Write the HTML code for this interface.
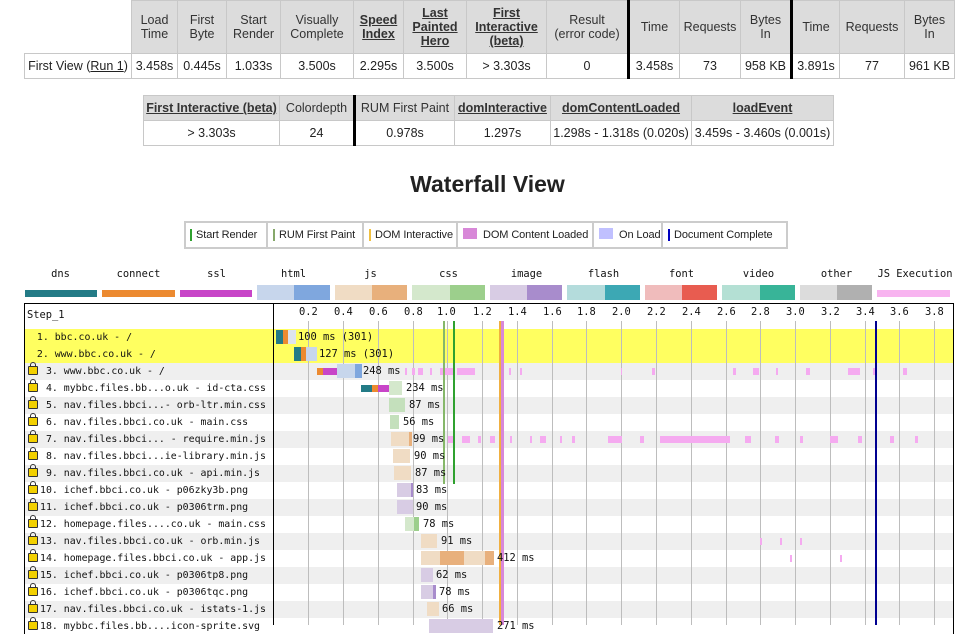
<!DOCTYPE html>
<html><head><meta charset="utf-8"><style>
body{margin:0;width:965px;height:625px;overflow:hidden;background:#fff;font-family:"Liberation Sans",Arial,sans-serif;color:#222;position:relative}
.a{position:absolute}
table{border-collapse:collapse;position:absolute;font-size:12.5px;table-layout:fixed}
td,th{border:1px solid #c8c8c8;text-align:center;padding:0;font-weight:normal;white-space:nowrap;overflow:hidden}
th{background:#dcdcdc;color:#333}
a{color:#222}
.tk{border-left:3px solid #000}
.m{font-family:"DejaVu Sans Mono","Liberation Mono",monospace;font-size:9.9px;color:#111;white-space:pre}
.leg{font-size:11px;white-space:nowrap;letter-spacing:-0.1px}
.leg>div{overflow:hidden}
.row{position:absolute;left:25px;width:928px;height:17px}
.lab{position:absolute;left:0;width:249px;height:17px;line-height:17px}
.lk{display:inline-block;width:8px;height:7px;background:#f2d000;border:1px solid #333;border-radius:1px;margin:0 2px 0 3px;vertical-align:-1px;position:relative}
.lk:before{content:"";position:absolute;left:1px;top:-5px;width:4px;height:4px;border:1px solid #333;border-bottom:none;border-radius:3px 3px 0 0}
.b{position:absolute;height:14px;top:1px}
.t{position:absolute;top:0;line-height:17px;font-size:10.4px}
.g{position:absolute;top:321px;width:1px;height:304px;background:#bdbdbd}
.jx{position:absolute;height:7px;top:5px;background:#f5aaf0}
</style></head><body>

<table style="left:24px;top:0;width:930px">
<colgroup><col style="width:107px"><col style="width:46px"><col style="width:49px"><col style="width:54px"><col style="width:73px"><col style="width:50px"><col style="width:63px"><col style="width:80px"><col style="width:82px"><col style="width:51px"><col style="width:61px"><col style="width:51px"><col style="width:48px"><col style="width:65px"><col style="width:50px"></colgroup>
<tr style="height:53px"><td style="border:none;border-bottom:1px solid #c8c8c8;background:#fff"></td>
<th>Load<br>Time</th><th>First<br>Byte</th><th>Start<br>Render</th><th>Visually<br>Complete</th><th><u><b>Speed<br>Index</b></u></th><th><u><b>Last<br>Painted<br>Hero</b></u></th><th><u><b>First<br>Interactive<br>(beta)</b></u></th><th>Result<br>(error code)</th><th class="tk">Time</th><th>Requests</th><th>Bytes<br>In</th><th class="tk">Time</th><th>Requests</th><th>Bytes<br>In</th></tr>
<tr style="height:25px"><td>First View (<u>Run 1</u>)</td><td>3.458s</td><td>0.445s</td><td>1.033s</td><td>3.500s</td><td>2.295s</td><td>3.500s</td><td>&gt; 3.303s</td><td>0</td><td class="tk">3.458s</td><td>73</td><td>958 KB</td><td class="tk">3.891s</td><td>77</td><td>961 KB</td></tr>
</table>

<table style="left:143px;top:95px;width:690px">
<colgroup><col style="width:136px"><col style="width:75px"><col style="width:100px"><col style="width:96px"><col style="width:141px"><col style="width:142px"></colgroup>
<tr style="height:25px"><th><u><b>First Interactive (beta)</b></u></th><th>Colordepth</th><th class="tk">RUM First Paint</th><th><u><b>domInteractive</b></u></th><th><u><b>domContentLoaded</b></u></th><th><u><b>loadEvent</b></u></th></tr>
<tr style="height:25px"><td>&gt; 3.303s</td><td>24</td><td class="tk">0.978s</td><td>1.297s</td><td>1.298s - 1.318s (0.020s)</td><td>3.459s - 3.460s (0.001s)</td></tr>
</table>

<div class="a" style="left:0;width:975px;top:171px;text-align:center;font-size:23px;font-weight:bold;color:#222">Waterfall View</div>

<div class="a leg" style="left:184px;top:221px;width:604px;height:28px;border:2px solid #ccc;box-sizing:border-box;display:flex">
<div style="width:76px;border-right:2px solid #ccc;line-height:24px;padding-left:4px"><span style="border-left:2px solid #2fa12f;padding-left:4px">Start Render</span></div>
<div style="width:89px;border-right:2px solid #ccc;line-height:24px;padding-left:5px"><span style="border-left:2px solid #86a86a;padding-left:4px">RUM First Paint</span></div>
<div style="width:87px;border-right:2px solid #ccc;line-height:24px;padding-left:5px"><span style="border-left:2px solid #f0c040;padding-left:4px">DOM Interactive</span></div>
<div style="width:129px;border-right:2px solid #ccc;line-height:24px;padding-left:5px"><span style="display:inline-block;width:14px;height:11px;background:#d888d8;vertical-align:-1px;margin-right:6px"></span>DOM Content Loaded</div>
<div style="width:62px;border-right:2px solid #ccc;line-height:24px;padding-left:5px"><span style="display:inline-block;width:14px;height:11px;background:#c0c0ff;vertical-align:-1px;margin-right:6px"></span>On Load</div>
<div style="width:110px;line-height:24px;padding-left:5px"><span style="border-left:2px solid #0000c0;padding-left:4px">Document Complete</span></div>
</div>

<div class="m" style="font-size:10.4px">
<div class="a" style="left:24px;top:268px;width:73px;text-align:center">dns</div>
<div class="a" style="left:102px;top:268px;width:73px;text-align:center">connect</div>
<div class="a" style="left:180px;top:268px;width:73px;text-align:center">ssl</div>
<div class="a" style="left:257px;top:268px;width:73px;text-align:center">html</div>
<div class="a" style="left:334px;top:268px;width:73px;text-align:center">js</div>
<div class="a" style="left:412px;top:268px;width:73px;text-align:center">css</div>
<div class="a" style="left:490px;top:268px;width:73px;text-align:center">image</div>
<div class="a" style="left:567px;top:268px;width:73px;text-align:center">flash</div>
<div class="a" style="left:645px;top:268px;width:73px;text-align:center">font</div>
<div class="a" style="left:722px;top:268px;width:73px;text-align:center">video</div>
<div class="a" style="left:800px;top:268px;width:73px;text-align:center">other</div>
<div class="a" style="left:875px;top:268px;width:80px;text-align:center">JS Execution</div>
</div>
<div class="a" style="left:25px;top:290px;width:72px;height:7px;background:#237b86"></div>
<div class="a" style="left:102px;top:290px;width:73px;height:7px;background:#ec8a30"></div>
<div class="a" style="left:180px;top:290px;width:72px;height:7px;background:#c845c8"></div>
<div class="a" style="left:257px;top:285px;width:37px;height:15px;background:#c7d6ec"></div><div class="a" style="left:294px;top:285px;width:36px;height:15px;background:#7fa7de"></div>
<div class="a" style="left:335px;top:285px;width:37px;height:15px;background:#f0dcc4"></div><div class="a" style="left:372px;top:285px;width:35px;height:15px;background:#e8b07c"></div>
<div class="a" style="left:412px;top:285px;width:38px;height:15px;background:#d4e8cc"></div><div class="a" style="left:450px;top:285px;width:35px;height:15px;background:#9ccf8c"></div>
<div class="a" style="left:490px;top:285px;width:37px;height:15px;background:#d8cce4"></div><div class="a" style="left:527px;top:285px;width:35px;height:15px;background:#a88ccc"></div>
<div class="a" style="left:567px;top:285px;width:38px;height:15px;background:#b4dcdc"></div><div class="a" style="left:605px;top:285px;width:35px;height:15px;background:#3ca8b4"></div>
<div class="a" style="left:645px;top:285px;width:37px;height:15px;background:#f0bcbc"></div><div class="a" style="left:682px;top:285px;width:35px;height:15px;background:#e85c50"></div>
<div class="a" style="left:722px;top:285px;width:38px;height:15px;background:#b4e0d4"></div><div class="a" style="left:760px;top:285px;width:35px;height:15px;background:#38b498"></div>
<div class="a" style="left:800px;top:285px;width:37px;height:15px;background:#dcdcdc"></div><div class="a" style="left:837px;top:285px;width:35px;height:15px;background:#b0b0b0"></div>
<div class="a" style="left:877px;top:290px;width:73px;height:7px;background:#f8b4f0"></div>

<div class="a" style="left:24px;top:303px;width:928px;height:330px;border:1px solid #000;border-bottom:none"></div>
<div class="a m" style="left:27px;top:309px;font-size:10.4px">Step_1</div>

<div class="a" style="left:25px;top:329px;width:928px;height:34px;background:#ffff60"></div>
<div class="a" style="left:25px;top:363px;width:928px;height:17px;background:#efefef"></div>
<div class="a" style="left:25px;top:397px;width:928px;height:17px;background:#efefef"></div>
<div class="a" style="left:25px;top:431px;width:928px;height:17px;background:#efefef"></div>
<div class="a" style="left:25px;top:465px;width:928px;height:17px;background:#efefef"></div>
<div class="a" style="left:25px;top:499px;width:928px;height:17px;background:#efefef"></div>
<div class="a" style="left:25px;top:533px;width:928px;height:17px;background:#efefef"></div>
<div class="a" style="left:25px;top:567px;width:928px;height:17px;background:#efefef"></div>
<div class="a" style="left:25px;top:601px;width:928px;height:17px;background:#efefef"></div>
<div class="a" style="left:273px;top:304px;width:1px;height:321px;background:#000"></div>

<div class="g" style="left:308px"></div><div class="g" style="left:343px"></div><div class="g" style="left:378px"></div><div class="g" style="left:413px"></div><div class="g" style="left:447px"></div><div class="g" style="left:482px"></div><div class="g" style="left:517px"></div><div class="g" style="left:552px"></div><div class="g" style="left:586px"></div><div class="g" style="left:621px"></div><div class="g" style="left:656px"></div><div class="g" style="left:691px"></div><div class="g" style="left:726px"></div><div class="g" style="left:760px"></div><div class="g" style="left:795px"></div><div class="g" style="left:830px"></div><div class="g" style="left:865px"></div><div class="g" style="left:899px"></div><div class="g" style="left:934px"></div>
<div class="m" style="font-size:10.4px">
<div class="a" style="left:299px;top:306px">0.2</div><div class="a" style="left:334px;top:306px">0.4</div><div class="a" style="left:369px;top:306px">0.6</div><div class="a" style="left:404px;top:306px">0.8</div><div class="a" style="left:437px;top:306px">1.0</div><div class="a" style="left:473px;top:306px">1.2</div><div class="a" style="left:508px;top:306px">1.4</div><div class="a" style="left:543px;top:306px">1.6</div><div class="a" style="left:577px;top:306px">1.8</div><div class="a" style="left:612px;top:306px">2.0</div><div class="a" style="left:647px;top:306px">2.2</div><div class="a" style="left:682px;top:306px">2.4</div><div class="a" style="left:717px;top:306px">2.6</div><div class="a" style="left:751px;top:306px">2.8</div><div class="a" style="left:786px;top:306px">3.0</div><div class="a" style="left:821px;top:306px">3.2</div><div class="a" style="left:856px;top:306px">3.4</div><div class="a" style="left:890px;top:306px">3.6</div><div class="a" style="left:925px;top:306px">3.8</div>
</div>

<div class="jx" style="left:405px;top:368px;width:2px"></div><div class="jx" style="left:412px;top:368px;width:3px"></div><div class="jx" style="left:418px;top:368px;width:5px"></div><div class="jx" style="left:430px;top:368px;width:2px"></div><div class="jx" style="left:440px;top:368px;width:14px"></div><div class="jx" style="left:457px;top:368px;width:18px"></div><div class="jx" style="left:509px;top:368px;width:2px"></div><div class="jx" style="left:520px;top:368px;width:2px"></div><div class="jx" style="left:621px;top:368px;width:1px"></div><div class="jx" style="left:652px;top:368px;width:3px"></div><div class="jx" style="left:733px;top:368px;width:3px"></div><div class="jx" style="left:753px;top:368px;width:6px"></div><div class="jx" style="left:776px;top:368px;width:2px"></div><div class="jx" style="left:806px;top:368px;width:4px"></div><div class="jx" style="left:848px;top:368px;width:12px"></div><div class="jx" style="left:873px;top:368px;width:4px"></div><div class="jx" style="left:903px;top:368px;width:4px"></div>
<div class="jx" style="left:448px;top:436px;width:6px"></div><div class="jx" style="left:462px;top:436px;width:8px"></div><div class="jx" style="left:478px;top:436px;width:3px"></div><div class="jx" style="left:490px;top:436px;width:5px"></div><div class="jx" style="left:510px;top:436px;width:2px"></div><div class="jx" style="left:530px;top:436px;width:2px"></div><div class="jx" style="left:540px;top:436px;width:6px"></div><div class="jx" style="left:560px;top:436px;width:2px"></div><div class="jx" style="left:572px;top:436px;width:3px"></div><div class="jx" style="left:608px;top:436px;width:14px"></div><div class="jx" style="left:640px;top:436px;width:4px"></div><div class="jx" style="left:660px;top:436px;width:70px"></div><div class="jx" style="left:745px;top:436px;width:6px"></div><div class="jx" style="left:775px;top:436px;width:4px"></div><div class="jx" style="left:800px;top:436px;width:3px"></div><div class="jx" style="left:830px;top:436px;width:8px"></div><div class="jx" style="left:858px;top:436px;width:4px"></div><div class="jx" style="left:890px;top:436px;width:4px"></div><div class="jx" style="left:915px;top:436px;width:3px"></div>
<div class="jx" style="left:760px;top:538px;width:2px"></div><div class="jx" style="left:780px;top:538px;width:2px"></div><div class="jx" style="left:800px;top:538px;width:2px"></div><div class="jx" style="left:790px;top:555px;width:2px"></div><div class="jx" style="left:840px;top:555px;width:2px"></div>

<div class="a" style="left:443px;top:321px;width:2px;height:163px;background:#86b86a"></div>
<div class="a" style="left:453px;top:321px;width:2px;height:163px;background:#2fa12f"></div>
<div class="a" style="left:499px;top:321px;width:2px;height:304px;background:#f0b040"></div>
<div class="a" style="left:501px;top:321px;width:3px;height:304px;background:#d888d8"></div>
<div class="a" style="left:875px;top:321px;width:2px;height:304px;background:#000090"></div>

<div class="m">
<div class="row" style="top:329px"><div class="lab">  1. bbc.co.uk - /</div>
<div class="b" style="left:251px;width:7px;background:#237b86"></div><div class="b" style="left:258px;width:5px;background:#ec8a30"></div><div class="b" style="left:263px;width:8px;background:#dde4ee"></div><div class="t" style="left:273px">100 ms (301)</div></div>
<div class="row" style="top:346px"><div class="lab">  2. www.bbc.co.uk - /</div>
<div class="b" style="left:269px;width:7px;background:#237b86"></div><div class="b" style="left:276px;width:5px;background:#ec8a30"></div><div class="b" style="left:281px;width:11px;background:#c7d6ec"></div><div class="t" style="left:294px">127 ms (301)</div></div>
<div class="row" style="top:363px"><div class="lab"><span class="lk"></span> 3. www.bbc.co.uk - /</div>
<div class="b" style="left:292px;top:5px;height:7px;width:6px;background:#ec8a30"></div><div class="b" style="left:298px;top:5px;height:7px;width:14px;background:#c845c8"></div><div class="b" style="left:312px;width:18px;background:#c7d6ec"></div><div class="b" style="left:330px;width:7px;background:#7fa7de"></div><div class="t" style="left:338px">248 ms</div></div>
<div class="row" style="top:380px"><div class="lab"><span class="lk"></span> 4. mybbc.files.bb...o.uk - id-cta.css</div>
<div class="b" style="left:336px;top:5px;height:7px;width:11px;background:#237b86"></div><div class="b" style="left:347px;top:5px;height:7px;width:6px;background:#ec8a30"></div><div class="b" style="left:353px;top:5px;height:7px;width:11px;background:#c845c8"></div><div class="b" style="left:364px;width:13px;background:#d4e8cc"></div><div class="t" style="left:381px">234 ms</div></div>
<div class="row" style="top:397px"><div class="lab"><span class="lk"></span> 5. nav.files.bbci...- orb-ltr.min.css</div>
<div class="b" style="left:364px;width:16px;background:#c4e0bc"></div><div class="t" style="left:384px">87 ms</div></div>
<div class="row" style="top:414px"><div class="lab"><span class="lk"></span> 6. nav.files.bbci.co.uk - main.css</div>
<div class="b" style="left:365px;width:9px;background:#c4e0bc"></div><div class="t" style="left:378px">56 ms</div></div>
<div class="row" style="top:431px"><div class="lab"><span class="lk"></span> 7. nav.files.bbci... - require.min.js</div>
<div class="b" style="left:366px;width:18px;background:#f0dcc4"></div><div class="b" style="left:384px;width:3px;background:#e8b07c"></div><div class="t" style="left:388px">99 ms</div></div>
<div class="row" style="top:448px"><div class="lab"><span class="lk"></span> 8. nav.files.bbci...ie-library.min.js</div>
<div class="b" style="left:368px;width:17px;background:#f0dcc4"></div><div class="t" style="left:389px">90 ms</div></div>
<div class="row" style="top:465px"><div class="lab"><span class="lk"></span> 9. nav.files.bbci.co.uk - api.min.js</div>
<div class="b" style="left:369px;width:17px;background:#f0dcc4"></div><div class="t" style="left:390px">87 ms</div></div>
<div class="row" style="top:482px"><div class="lab"><span class="lk"></span>10. ichef.bbci.co.uk - p06zky3b.png</div>
<div class="b" style="left:372px;width:14px;background:#d8cce4"></div><div class="b" style="left:386px;width:2px;background:#a88ccc"></div><div class="t" style="left:391px">83 ms</div></div>
<div class="row" style="top:499px"><div class="lab"><span class="lk"></span>11. ichef.bbci.co.uk - p0306trm.png</div>
<div class="b" style="left:372px;width:16px;background:#d8cce4"></div><div class="t" style="left:391px">90 ms</div></div>
<div class="row" style="top:516px"><div class="lab"><span class="lk"></span>12. homepage.files....co.uk - main.css</div>
<div class="b" style="left:380px;width:9px;background:#d4e8cc"></div><div class="b" style="left:389px;width:5px;background:#9ccf8c"></div><div class="t" style="left:398px">78 ms</div></div>
<div class="row" style="top:533px"><div class="lab"><span class="lk"></span>13. nav.files.bbci.co.uk - orb.min.js</div>
<div class="b" style="left:396px;width:16px;background:#f0dcc4"></div><div class="t" style="left:416px">91 ms</div></div>
<div class="row" style="top:550px"><div class="lab"><span class="lk"></span>14. homepage.files.bbci.co.uk - app.js</div>
<div class="b" style="left:396px;width:19px;background:#f0dcc4"></div><div class="b" style="left:415px;width:24px;background:#e8b07c"></div><div class="b" style="left:439px;width:21px;background:#f0dcc4"></div><div class="b" style="left:460px;width:9px;background:#e8b07c"></div><div class="t" style="left:472px">412 ms</div></div>
<div class="row" style="top:567px"><div class="lab"><span class="lk"></span>15. ichef.bbci.co.uk - p0306tp8.png</div>
<div class="b" style="left:396px;width:12px;background:#d8cce4"></div><div class="t" style="left:411px">62 ms</div></div>
<div class="row" style="top:584px"><div class="lab"><span class="lk"></span>16. ichef.bbci.co.uk - p0306tqc.png</div>
<div class="b" style="left:396px;width:12px;background:#d8cce4"></div><div class="b" style="left:408px;width:3px;background:#a88ccc"></div><div class="t" style="left:414px">78 ms</div></div>
<div class="row" style="top:601px"><div class="lab"><span class="lk"></span>17. nav.files.bbci.co.uk - istats-1.js</div>
<div class="b" style="left:402px;width:12px;background:#f0dcc4"></div><div class="t" style="left:417px">66 ms</div></div>
<div class="row" style="top:618px"><div class="lab"><span class="lk"></span>18. mybbc.files.bb....icon-sprite.svg</div>
<div class="b" style="left:404px;width:64px;background:#d8cce4"></div><div class="t" style="left:472px">271 ms</div></div>
</div>
</body></html>
